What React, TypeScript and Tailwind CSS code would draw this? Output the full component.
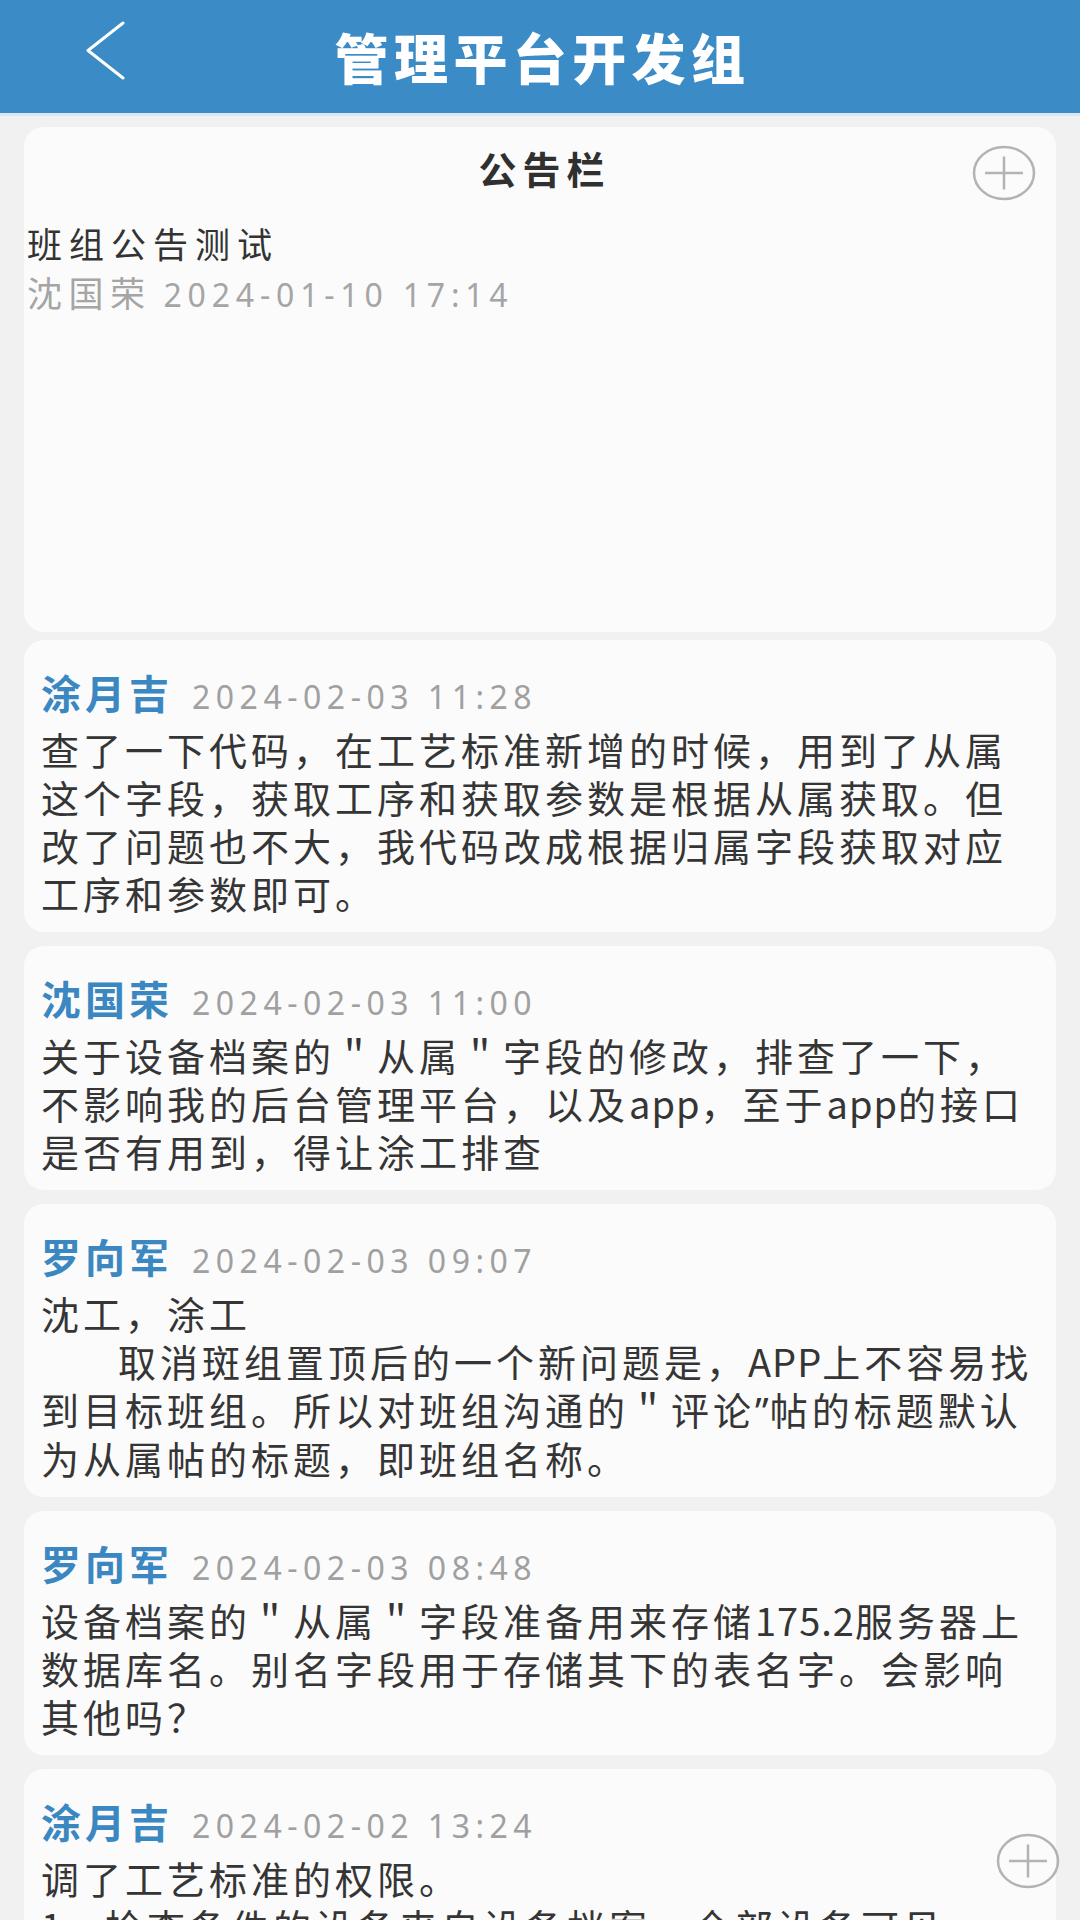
import React from 'react';

type Post = {
  name: string;
  time: string;
  lines: string[];
  indentLine?: number;
};

const posts: Post[] = [
  {
    name: '涂月吉',
    time: '2024-02-03 11:28',
    lines: [
      '查了一下代码，在工艺标准新增的时候，用到了从属',
      '这个字段，获取工序和获取参数是根据从属获取。但',
      '改了问题也不大，我代码改成根据归属字段获取对应',
      '工序和参数即可。',
    ],
  },
  {
    name: '沈国荣',
    time: '2024-02-03 11:00',
    lines: [
      '关于设备档案的＂从属＂字段的修改，排查了一下，',
      '不影响我的后台管理平台，以及app，至于app的接口',
      '是否有用到，得让涂工排查',
    ],
  },
  {
    name: '罗向军',
    time: '2024-02-03 09:07',
    lines: [
      '沈工，涂工',
      '取消斑组置顶后的一个新问题是，APP上不容易找',
      '到目标班组。所以对班组沟通的＂评论”帖的标题默认',
      '为从属帖的标题，即班组名称。',
    ],
    indentLine: 1,
  },
  {
    name: '罗向军',
    time: '2024-02-03 08:48',
    lines: [
      '设备档案的＂从属＂字段准备用来存储175.2服务器上',
      '数据库名。别名字段用于存储其下的表名字。会影响',
      '其他吗？',
    ],
  },
  {
    name: '涂月吉',
    time: '2024-02-02 13:24',
    lines: ['调了工艺标准的权限。', '1、检查条件的设备来自设备档案，全部设备可见'],
  },
];

const cjk = "font-['Noto_Sans_CJK_SC',sans-serif]";
const digits = "font-['Noto_Sans','Noto_Sans_CJK_SC',sans-serif]";

// latin runs get tighter spacing than the han characters around them
function renderLine(line: string) {
  return line.split(/([A-Za-z0-9.]+|”)/).map((part, i) => {
    if (part === '”') {
      return (
        <span key={i} className={`${digits} tracking-[1px]`}>
          {part}
        </span>
      );
    }
    if (/^[A-Za-z0-9.]+$/.test(part)) {
      return (
        <span key={i} className="tracking-[1px]">
          {part}
        </span>
      );
    }
    return part;
  });
}

function PlusCircle({ className }: { className?: string }) {
  return (
    <svg viewBox="0 0 64 56" className={className} fill="none">
      <ellipse cx="32" cy="28" rx="30" ry="26" stroke="#b3b3b3" strokeWidth="2.5" />
      <path d="M13 28H51M32 11.5V44.5" stroke="#b3b3b3" strokeWidth="2.5" />
    </svg>
  );
}

function PostCard({ post }: { post: Post }) {
  return (
    <div className="rounded-[20px] bg-[#fbfbfb] pl-[17px] pr-4 pt-[22px] pb-[15px]">
      <div className="flex h-[48px] items-baseline whitespace-nowrap">
        <span className={`${cjk} text-[40px] font-bold tracking-[4px] text-[#3a87c2]`}>{post.name}</span>
        <span className={`${digits} ml-[19px] text-[32px] tracking-[5.5px] text-[#a0a0a0]`}>{post.time}</span>
      </div>
      <div className={`${cjk} mt-[15px] text-[38px] leading-[48px] tracking-[4px] text-[#353535]`}>
        {post.lines.map((line, i) => (
          <div key={i} className={`whitespace-nowrap ${post.indentLine === i ? 'pl-[77px]' : ''}`}>
            {renderLine(line)}
          </div>
        ))}
      </div>
    </div>
  );
}

export default function App() {
  return (
    <div className="relative h-[1920px] w-[1080px] overflow-hidden bg-[#f1f1f1]">
      <header className="relative flex h-[116px] items-center justify-center border-b-[3px] border-[#dbe7f0] bg-[#3a8bc6]">
        <svg viewBox="0 0 40 60" className="absolute left-[85px] top-[21px] h-[60px] w-[40px]" fill="none">
          <path d="M38 2L3 29.5L38 57" stroke="#ffffff" strokeWidth="3" strokeLinecap="round" strokeLinejoin="round" />
        </svg>
        <h1 className={`${cjk} pl-[5px] text-[54px] font-black leading-none tracking-[5.4px] text-white`}>
          管理平台开发组
        </h1>
      </header>

      <main className="flex flex-col px-[24px] pt-[11px]">
        <section className="relative h-[505px] rounded-[20px] bg-[#fbfbfb] pl-[3px] pt-[16px]">
          <div className="flex h-[48px] items-center justify-center">
            <h2 className={`${cjk} pl-[6px] text-[38px] font-bold tracking-[6px] text-[#303030]`}>公告栏</h2>
          </div>
          <PlusCircle className="absolute right-[20px] top-[18px] h-[56px] w-[64px]" />
          <div className="mt-[28px]">
            <div className={`${cjk} whitespace-nowrap text-[35px] leading-[48px] tracking-[7px] text-[#333333]`}>
              班组公告测试
            </div>
            <div className="mt-[1px] flex items-baseline whitespace-nowrap leading-[48px] text-[#a5a5a5]">
              <span className={`${cjk} text-[35px] tracking-[6.5px]`}>沈国荣</span>
              <span className={`${digits} ml-[12px] text-[32px] tracking-[5.8px]`}>2024-01-10 17:14</span>
            </div>
          </div>
        </section>

        <div className="mt-[8px] flex flex-col gap-[14px]">
          {posts.map((post, i) => (
            <PostCard key={i} post={post} />
          ))}
        </div>
      </main>

      <button className="absolute bottom-[31px] right-[20px] h-[56px] w-[64px]">
        <PlusCircle className="h-[56px] w-[64px]" />
      </button>
    </div>
  );
}
